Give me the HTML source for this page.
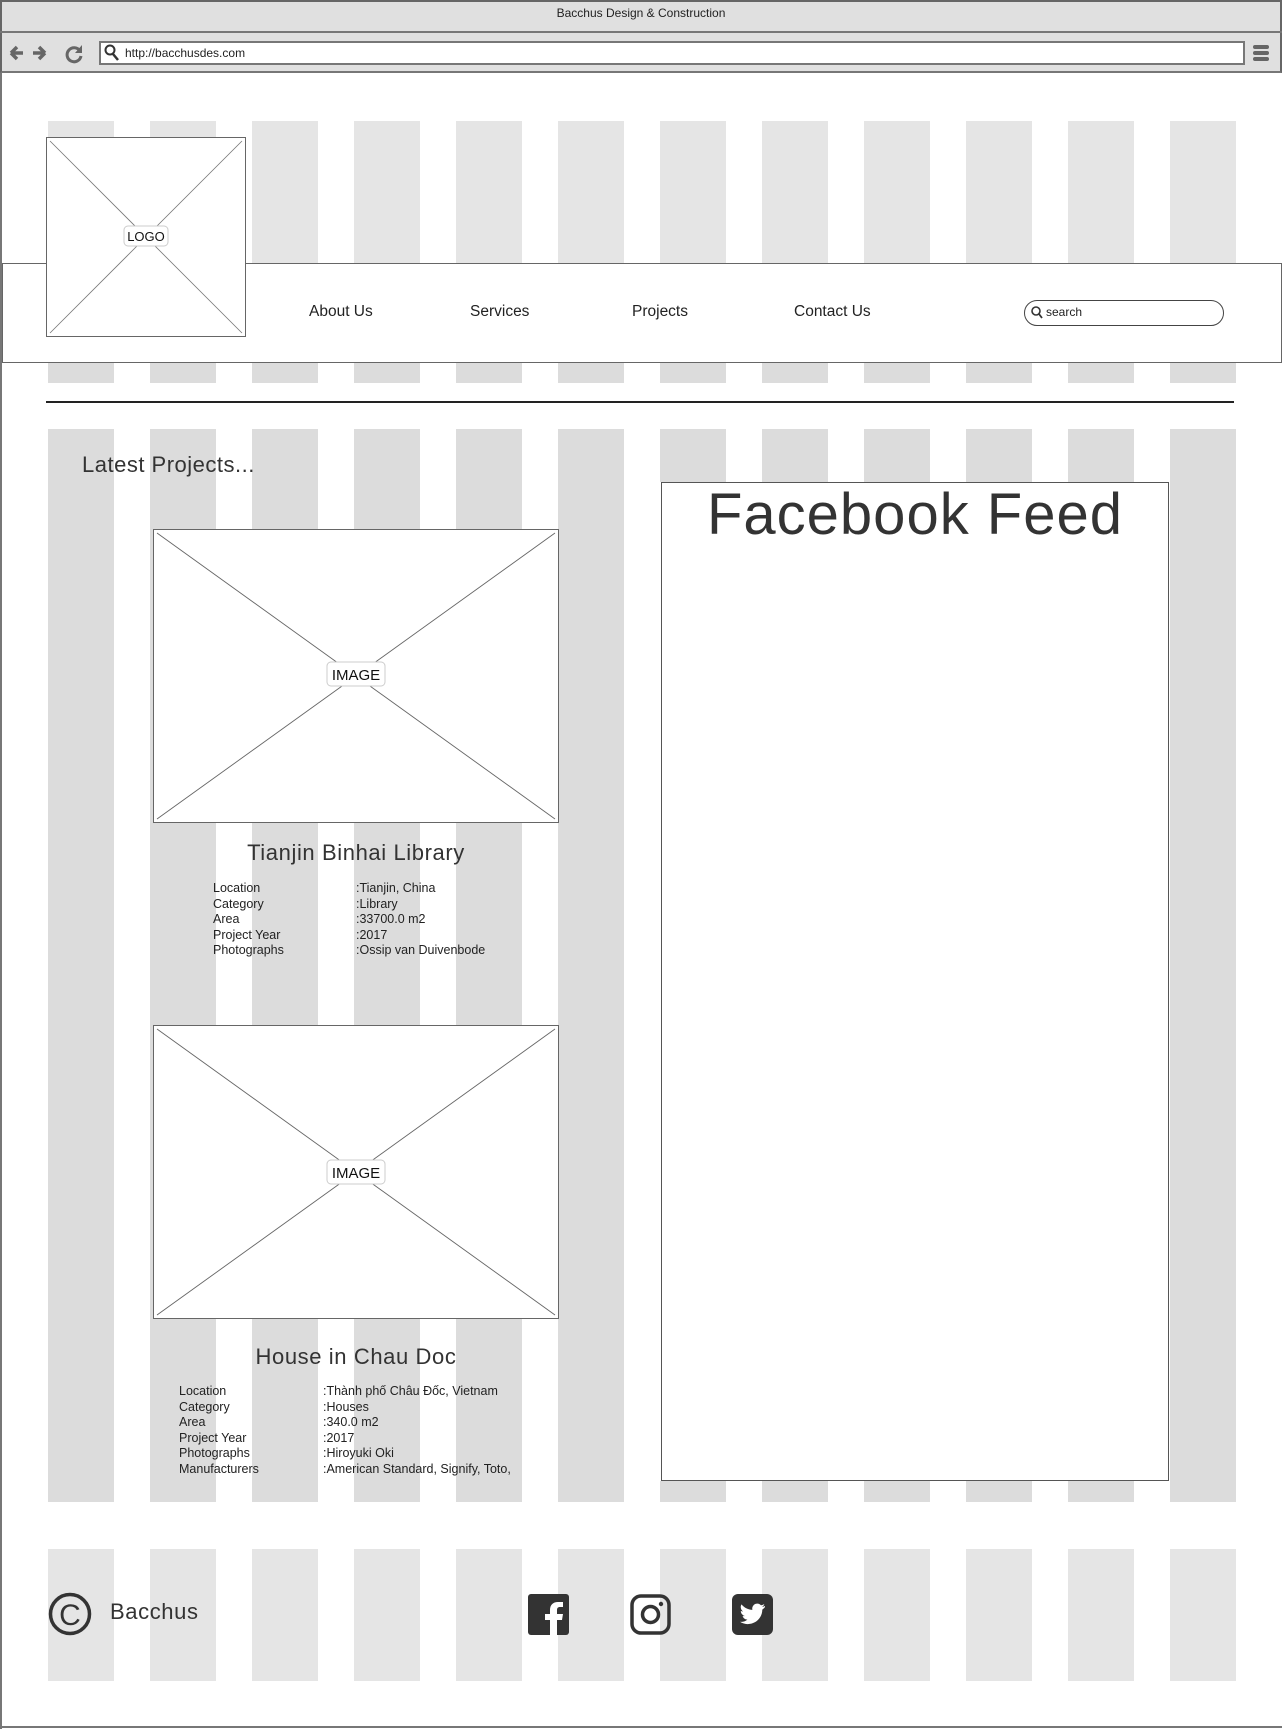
<!DOCTYPE html>
<html><head><meta charset="utf-8"><style>
*{margin:0;padding:0;box-sizing:border-box}
body{width:1282px;height:1729px;position:relative;background:#fff;font-family:"Liberation Sans",sans-serif;color:#333;overflow:hidden}
.a{position:absolute}
.col{position:absolute;width:66px}
.t{position:absolute;white-space:nowrap}
</style></head><body>
<div class="a" style="left:0;top:0;width:1282px;height:73px;background:#e0e0e0;border:2px solid #666;border-bottom:2px solid #777"></div>
<div class="a" style="left:0;top:31px;width:1282px;height:2px;background:#777"></div>
<div class="t" style="left:0;width:1282px;text-align:center;top:6px;font-size:12px;color:#222">Bacchus Design &amp; Construction</div>
<div class="a" style="left:99px;top:41px;width:1146px;height:24px;background:#fff;border:2px solid #777"></div>
<svg class="a" style="left:8px;top:42px" width="80" height="22"><path d="M3 11h12M3 11l6-6M3 11l6 6" stroke="#666" stroke-width="3.5" fill="none"/><path d="M37 11H25M37 11l-6-6M37 11l-6 6" stroke="#666" stroke-width="3.5" fill="none"/><path d="M72 9a7 7 0 1 0 1 5" stroke="#666" stroke-width="3" fill="none"/><path d="M74 3v8h-7z" fill="#666"/></svg>
<svg class="a" style="left:104px;top:44px" width="16" height="18"><circle cx="6" cy="6" r="4.5" stroke="#333" stroke-width="2" fill="none"/><path d="M9 10l5 6" stroke="#333" stroke-width="2.5"/></svg>
<div class="t" style="left:125px;top:46px;font-size:12px;color:#222">http://bacchusdes.com</div>
<div class="a" style="left:1253px;top:45px;width:16px;height:4px;background:#666;border-radius:2px"></div>
<div class="a" style="left:1253px;top:51px;width:16px;height:4px;background:#666;border-radius:2px"></div>
<div class="a" style="left:1253px;top:57px;width:16px;height:4px;background:#666;border-radius:2px"></div>
<div class="a" style="left:0;top:73px;width:2px;height:1656px;background:#777"></div>
<div class="a" style="left:0;top:1726px;width:1282px;height:2px;background:#777"></div>

<div id="cols"></div>
<script>
var h='',x;
for(var i=0;i<12;i++){x=48+i*102;
h+='<div class="col" style="left:'+x+'px;top:121px;height:142px;background:#e5e5e5"></div>';
h+='<div class="col" style="left:'+x+'px;top:362px;height:21px;background:#dcdcdc"></div>';
if(i!=6) h+='<div class="col" style="left:'+x+'px;top:429px;height:1073px;background:#dcdcdc"></div>';
h+='<div class="col" style="left:'+x+'px;top:1549px;height:132px;background:#e5e5e5"></div>';}
h+='<div class="col" style="left:660px;top:429px;height:53px;background:#dcdcdc"></div>';
h+='<div class="col" style="left:660px;top:1481px;height:21px;background:#dcdcdc"></div>';
document.getElementById('cols').innerHTML=h;
</script>

<div class="a" style="left:2px;top:263px;width:1280px;height:100px;background:#fff;border:1.5px solid #666"></div>
<div class="t" style="left:309px;top:303px;font-size:15.5px;color:#222">About Us</div>
<div class="t" style="left:470px;top:303px;font-size:15.5px;color:#222">Services</div>
<div class="t" style="left:632px;top:303px;font-size:15.5px;color:#222">Projects</div>
<div class="t" style="left:794px;top:303px;font-size:15.5px;color:#222">Contact Us</div>
<div class="a" style="left:1024px;top:300px;width:200px;height:26px;border:1.5px solid #444;border-radius:13px;background:#fff"></div>
<svg class="a" style="left:1030px;top:305px" width="14" height="16"><circle cx="6" cy="6" r="4" stroke="#333" stroke-width="1.6" fill="none"/><path d="M9 9l3 4" stroke="#333" stroke-width="1.8"/></svg>
<div class="t" style="left:1046px;top:305px;font-size:12px;color:#222">search</div>

<svg class="a" style="left:46px;top:137px" width="200" height="200"><rect x="0.5" y="0.5" width="199" height="199" fill="#fff" stroke="#666"/><path d="M4 4L196 196M196 4L4 196" stroke="#777" stroke-width="0.8"/><rect x="78" y="89" width="44" height="20" rx="4" fill="#fff" stroke="#ccc"/><text x="100" y="104" font-size="13" text-anchor="middle" fill="#111" font-family="Liberation Sans">LOGO</text></svg>

<div class="a" style="left:46px;top:401px;width:1188px;height:2px;background:#222"></div>

<div class="t" style="left:82px;top:452px;font-size:22px;color:#333;letter-spacing:0.5px">Latest Projects...</div>

<svg class="a" style="left:153px;top:529px" width="406" height="294"><rect x="0.5" y="0.5" width="405" height="293" fill="#fff" stroke="#666"/><path d="M4 4L402 290M402 4L4 290" stroke="#666" stroke-width="0.9"/><rect x="174" y="133" width="58" height="24" rx="4" fill="#fff" stroke="#ccc"/><text x="203" y="151" font-size="15" text-anchor="middle" fill="#111" font-family="Liberation Sans">IMAGE</text></svg>
<div class="t" style="left:153px;width:406px;text-align:center;top:840px;font-size:22px;letter-spacing:0.6px">Tianjin Binhai Library</div>
<div class="t" style="left:213px;top:881px;font-size:12.5px;line-height:15.5px;color:#222">Location<br>Category<br>Area<br>Project Year<br>Photographs</div>
<div class="t" style="left:356px;top:881px;font-size:12.5px;line-height:15.5px;color:#222">:Tianjin, China<br>:Library<br>:33700.0 m2<br>:2017<br>:Ossip van Duivenbode</div>

<svg class="a" style="left:153px;top:1025px" width="406" height="294"><rect x="0.5" y="0.5" width="405" height="293" fill="#fff" stroke="#666"/><path d="M4 4L402 290M402 4L4 290" stroke="#666" stroke-width="0.9"/><rect x="174" y="135" width="58" height="24" rx="4" fill="#fff" stroke="#ccc"/><text x="203" y="153" font-size="15" text-anchor="middle" fill="#111" font-family="Liberation Sans">IMAGE</text></svg>
<div class="t" style="left:153px;width:406px;text-align:center;top:1344px;font-size:22px;letter-spacing:0.6px">House in Chau Doc</div>
<div class="t" style="left:179px;top:1384px;font-size:12.5px;line-height:15.6px;color:#222">Location<br>Category<br>Area<br>Project Year<br>Photographs<br>Manufacturers</div>
<div class="t" style="left:323px;top:1384px;font-size:12.5px;line-height:15.6px;color:#222">:Thành phố Châu Đốc, Vietnam<br>:Houses<br>:340.0 m2<br>:2017<br>:Hiroyuki Oki<br>:American Standard, Signify, Toto,</div>

<div class="a" style="left:661px;top:482px;width:508px;height:999px;background:#fff;border:1.5px solid #555"></div>
<div class="t" style="left:661px;width:508px;text-align:center;top:481px;font-size:58px;color:#333;letter-spacing:1px">Facebook Feed</div>

<svg class="a" style="left:48px;top:1592px" width="44" height="44"><circle cx="22" cy="22" r="19.5" stroke="#333" stroke-width="3.5" fill="none"/><text x="22" y="33" font-size="30" text-anchor="middle" fill="#333" font-family="Liberation Sans">C</text></svg>
<div class="t" style="left:110px;top:1599px;font-size:22px;color:#333;letter-spacing:0.6px">Bacchus</div>
<svg class="a" style="left:528px;top:1594px" width="42" height="42"><rect width="41" height="41" rx="3" fill="#333"/><path d="M29 41V26h5l1-6h-6v-4c0-2 1-3 3-3h3V8h-5c-5 0-8 3-8 8v4h-5v6h5v15z" fill="#fff"/></svg>
<svg class="a" style="left:630px;top:1594px" width="42" height="42"><rect x="2" y="2" width="37" height="37" rx="9" fill="none" stroke="#333" stroke-width="3.5"/><circle cx="20.5" cy="20.5" r="8" fill="none" stroke="#333" stroke-width="3.5"/><circle cx="31" cy="10" r="2.2" fill="#333"/></svg>
<svg class="a" style="left:732px;top:1594px" width="42" height="42"><rect width="41" height="41" rx="6" fill="#333"/><path d="M33 12c-1 .5-2 .8-3 .9 1-.6 2-1.6 2.3-2.8-1 .6-2.2 1-3.3 1.2a5 5 0 0 0-8.6 4.6C16 15.7 12 13.6 9.5 10.4c-1.5 2.5-.7 5.6 1.6 7.1-.8 0-1.6-.2-2.3-.6 0 2.5 1.8 4.6 4.1 5.1-.8.2-1.5.2-2.3.1.7 2 2.6 3.5 4.8 3.5A10 10 0 0 1 8 27.8 14.5 14.5 0 0 0 30.3 15.6c1-.7 2-1.6 2.7-2.6z" fill="#fff"/></svg>
</body></html>
